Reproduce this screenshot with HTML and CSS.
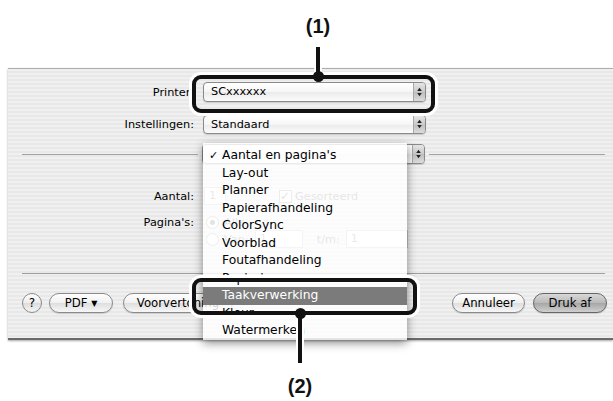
FILE: index.html
```html
<!DOCTYPE html>
<html lang="nl">
<head>
  <meta charset="UTF-8" />
  <meta name="viewport" content="width=device-width, initial-scale=1.0"/>
  <title>Afdrukken</title>
  <link rel="stylesheet" href="styles.css">
</head>
<body>
  <div class="page">
    <div class="dialog">
      <div class="row printer">
        <span class="label">Printer:</span>
        <div class="popup">
          <span class="value">SCxxxxxx</span>
          <span class="arrows"><svg width="5" height="10" viewBox="0 0 5 10"><path d="M2.5 0.8 L4.8 4 H0.2Z M2.5 9.2 L4.8 6 H0.2Z" fill="#222"/></svg></span>
        </div>
      </div>
      <div class="row settings">
        <span class="label">Instellingen:</span>
        <div class="popup">
          <span class="value">Standaard</span>
          <span class="arrows"><svg width="5" height="10" viewBox="0 0 5 10"><path d="M2.5 0.8 L4.8 4 H0.2Z M2.5 9.2 L4.8 6 H0.2Z" fill="#222"/></svg></span>
        </div>
      </div>
      <div class="sep-row">
        <div class="popup">
          <span class="value"></span>
          <span class="arrows"><svg width="5" height="10" viewBox="0 0 5 10"><path d="M2.5 0.8 L4.8 4 H0.2Z M2.5 9.2 L4.8 6 H0.2Z" fill="#222"/></svg></span>
        </div>
      </div>
      <div class="row copies">
        <span class="label">Aantal:</span>
        <span class="field small">1</span>
        <span class="check">✓</span>
        <span class="dim">Gesorteerd</span>
      </div>
      <div class="row pages">
        <span class="label">Pagina's:</span>
        <span class="radio on"></span>
        <span class="dim">Alle</span>
      </div>
      <div class="row range">
        <span class="label"></span>
        <span class="radio"></span>
        <span class="dim">Van:</span>
        <span class="field mid">1</span>
        <span class="dim">t/m:</span>
        <span class="field wide">1</span>
      </div>
      <div class="rule"></div>
      <div class="buttons">
        <span class="help">?</span>
        <span class="btn pdf">PDF <small>▼</small></span>
        <span class="btn preview">Voorvertoning</span>
        <span class="spacer"></span>
        <span class="btn cancel">Annuleer</span>
        <span class="btn print">Druk af</span>
      </div>
    </div>

    <ul class="menu">
      <li class="checked">Aantal en pagina's</li>
      <li>Lay-out</li>
      <li>Planner</li>
      <li>Papierafhandeling</li>
      <li>ColorSync</li>
      <li>Voorblad</li>
      <li>Foutafhandeling</li>
      <li>Papierinvoer</li>
      <li class="active">Taakverwerking</li>
      <li>Kleur</li>
      <li>Watermerken</li>
    </ul>

    <!-- callouts -->
    <div class="mark mark-1"></div>
    <div class="stem stem-1"></div>
    <div class="dot dot-1"></div>
    <span class="num num-1">(1)</span>

    <div class="mark mark-2"></div>
    <div class="stem stem-2"></div>
    <div class="dot dot-2"></div>
    <span class="num num-2">(2)</span>
  </div>
</body>
</html>
```

FILE: styles.css
```css
* {
  box-sizing: border-box;
}
body {
  margin: 0;
  background: #fff;
  font-family: "DejaVu Sans", sans-serif;
  color: #000;
}
.page {
  position: relative;
  width: 613px;
  height: 401px;
  padding-top: 68px;
  overflow: hidden;
}
.dialog {
  margin-left: 8px;
  height: 272px;
  border-top: 1px solid #acacac;
  border-bottom: 2px solid #6a6a6a;
  box-shadow: 0 1px 2px rgba(0,0,0,0.35);
  background: repeating-linear-gradient(#f0f0f0 0 2px, #e8e8e8 2px 4px);
  font-size: 11.3px;
}
.row {
  display: flex;
  align-items: center;
  height: 20px;
}
.label {
  width: 186px;
  margin-right: 9px;
  text-align: right;
  white-space: nowrap;
}
.printer { margin-top: 13px; }
.settings { margin-top: 12px; }
.copies { margin-top: 22px; }
.pages { margin-top: 6px; }
.range { margin-top: -2px; height: 18px; }

.popup {
  display: flex;
  width: 223px;
  height: 20px;
  border: 1px solid #8a8a8a;
  border-radius: 4px;
  background: linear-gradient(#fff, #f6f6f6 50%, #ebebeb 51%, #fbfbfb);
  box-shadow: 0 1px 1px rgba(0,0,0,0.15);
  overflow: hidden;
}
.value {
  flex: 1;
  padding-left: 7px;
  line-height: 18px;
}
.arrows {
  width: 12px;
  display: flex;
  align-items: center;
  justify-content: center;
  border-left: 1px solid #a8a8a8;
  background: linear-gradient(#e6e6e6, #c9c9c9 50%, #bdbdbd 51%, #dcdcdc);
}
.settings .popup {
  height: 19px;
}

.sep-row {
  display: flex;
  align-items: center;
  height: 20px;
  margin-top: 10px;
  padding: 0 8px 0 14px;
}
.sep-row::before,
.sep-row::after {
  content: "";
  flex: 1;
  height: 1px;
  background: #a3a3a3;
}
.sep-row .popup {
  margin: 0 4px;
}

.field {
  height: 18px;
  border: 1px solid #c4c4c4;
  background: #fbfbfb;
  color: #888;
  padding-left: 4px;
  line-height: 16px;
}
.small { width: 22px; margin-left: 1px; }
.mid { width: 48px; margin: 0 14px 0 6px; }
.wide { width: 62px; margin-left: 6px; }
.check {
  width: 13px;
  height: 13px;
  margin: 0 3px 0 53px;
  border: 1px solid #999;
  background: #fff;
  color: #666;
  font-size: 12px;
  line-height: 11px;
}
.dim {
  color: #777;
}
.radio {
  width: 13px;
  height: 13px;
  margin: 0 5px 0 3px;
  border: 1px solid #999;
  border-radius: 50%;
  background: #fff;
}
.radio.on {
  background: radial-gradient(#666 0 2px, #fff 3px);
}

.rule {
  height: 1px;
  margin: 25px 8px 0 14px;
  background: #a0a0a0;
}
.buttons {
  display: flex;
  align-items: center;
  height: 20px;
  margin-top: 19px;
  padding: 0 6px 0 14px;
  font-size: 11.7px;
}
.help {
  width: 20px;
  height: 20px;
  margin-right: 7px;
  border: 1px solid #8a8a8a;
  border-radius: 50%;
  background: linear-gradient(#fff, #ececec 50%, #dcdcdc 51%, #f6f6f6);
  text-align: center;
  line-height: 18px;
  font-size: 12px;
}
.btn {
  height: 20px;
  border: 1px solid #8a8a8a;
  border-radius: 10px;
  background: linear-gradient(#fff, #f0f0f0 50%, #dedede 51%, #f7f7f7);
  text-align: center;
  line-height: 18px;
  box-shadow: 0 1px 1px rgba(0,0,0,0.15);
}
.btn small {
  font-size: 8px;
  vertical-align: 1px;
}
.pdf { width: 64px; margin-right: 10px; }
.preview { width: 110px; }
.spacer { flex: 1; }
.cancel { width: 73px; margin-right: 8px; }
.print {
  width: 74px;
  border-color: #666;
  background: linear-gradient(#d8d8d8, #b9b9b9 50%, #a6a6a6 51%, #cfcfcf);
}

.menu {
  position: absolute;
  left: 203px;
  top: 143px;
  width: 204px;
  height: 197px;
  margin: 0;
  padding: 4px 0 0;
  list-style: none;
  background: rgba(255,255,255,0.82);
  box-shadow: 0 3px 9px rgba(0,0,0,0.45);
  overflow: hidden;
  font-size: 12.3px;
}
.menu li {
  position: relative;
  height: 17.5px;
  line-height: 17.5px;
  padding-left: 19px;
  white-space: nowrap;
}
.menu .checked::before {
  content: "✓";
  position: absolute;
  left: 6px;
  font-size: 11px;
}
.menu .active {
  background: #7b7b7b;
  color: #fff;
}

.mark {
  position: absolute;
  border: 4px solid #111;
  border-radius: 9px;
  box-shadow: 0 0 0 3px #fff;
}
.mark-1 { left: 192px; top: 75px; width: 243px; height: 38px; }
.mark-2 { left: 192px; top: 278px; width: 225px; height: 37px; }
.stem {
  position: absolute;
  width: 4px;
  background: #111;
  box-shadow: 0 0 0 2px #fff;
}
.stem-1 { left: 316px; top: 47px; height: 27px; }
.stem-2 { left: 298px; top: 315px; height: 48px; }
.dot {
  position: absolute;
  width: 11px;
  height: 11px;
  border-radius: 50%;
  background: #111;
}
.dot-1 { left: 312.5px; top: 70.5px; }
.dot-2 { left: 294.5px; top: 307.5px; }
.num {
  position: absolute;
  width: 40px;
  text-align: center;
  font: bold 20px/24px "Liberation Sans", Arial, sans-serif;
  color: #111;
}
.num-1 { left: 298px; top: 14px; }
.num-2 { left: 280px; top: 374px; }
```
